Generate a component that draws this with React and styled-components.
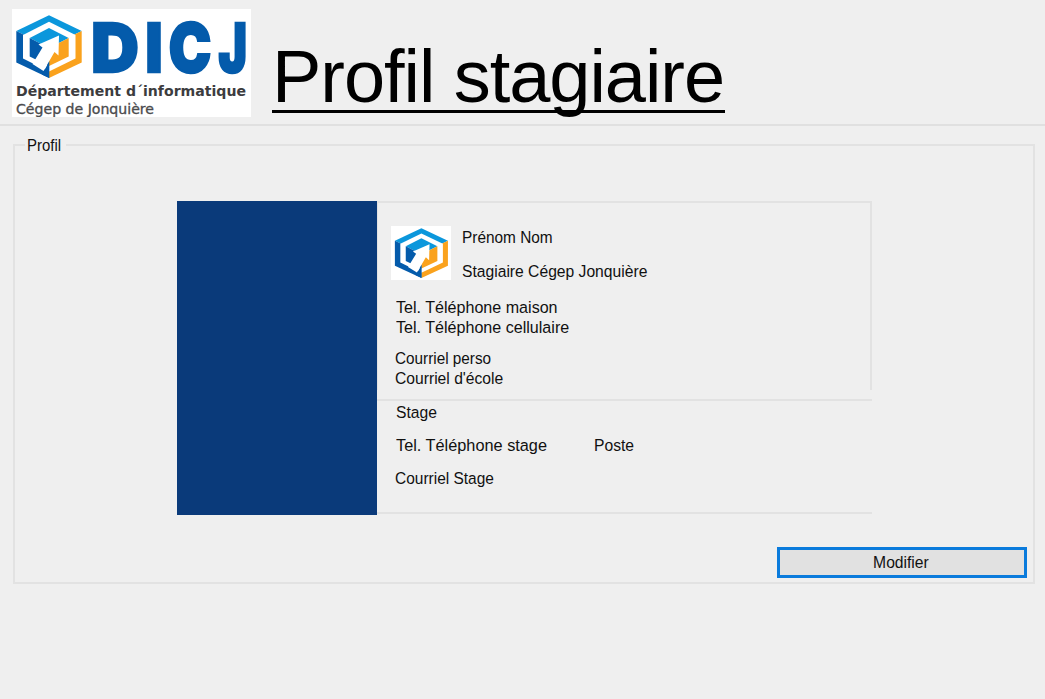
import React from "react";
import styled, { createGlobalStyle } from "styled-components";

const GlobalStyle = createGlobalStyle`
  * { box-sizing: border-box; }
  body {
    margin: 0;
    background: #efefef;
    color: #111;
    font-family: "Liberation Sans", Arial, sans-serif;
  }
`;

const Window = styled.main`
  width: 1045px;
  height: 699px;
  overflow: hidden;
  background: #efefef;
`;

const Header = styled.header`
  display: flex;
  align-items: flex-start;
  height: 126px;
  padding: 9px 0 0 12px;
  border-bottom: 2px solid #e0e0e0;
`;

const Logo = styled.svg`
  flex: none;
  display: block;
  width: 239px;
  height: 108px;
  background: #fff;
`;

const Title = styled.h1`
  margin: 27px 0 0 21px;
  height: 77px;
  width: 453px;
  border-bottom: 3px solid #000;
  color: #000;
  font-size: 74px;
  line-height: 82px;
  font-weight: 400;
  letter-spacing: -1.05px;
  white-space: nowrap;
`;

const GroupBox = styled.fieldset`
  margin: 9px 10px 0 13px;
  padding: 0 6px 0 162px;
  height: 449px;
  min-width: 0;
  border: 2px solid #e2e2e2;
`;

const Legend = styled.legend`
  margin-left: -152px;
  padding: 0 2px;
  height: 19px;
`;

const Text = styled.span`
  display: block;
  width: max-content;
  font-size: 17.4px;
  line-height: 20px;
  white-space: nowrap;
  transform: scaleX(${(p) => p.$scale || 0.9});
  transform-origin: ${(p) => p.$origin || "left"} center;
`;

const LegendBox = styled.div`
  width: 37px;
`;

const Card = styled.section`
  display: flex;
  margin-top: 47px;
  width: 695px;
  height: 314px;
`;

const Banner = styled.div`
  width: 200px;
  background: #0a3a7a;
`;

const Details = styled.div`
  flex: 1;
`;

const Person = styled.div`
  height: 189px;
  padding: 23px 0 0 13px;
  border: solid #e2e2e2;
  border-width: 2px 2px 0 1px;
`;

const Identity = styled.div`
  display: flex;
  gap: 11px;
  height: 71px;
`;

const Avatar = styled.svg`
  width: 60px;
  height: 54px;
  background: #fff;
`;

const Names = styled.div`
  display: grid;
  align-content: start;
  gap: 14px;
  padding-top: 1px;
`;

const Lines = styled.div`
  margin: 0 0 11px ${(p) => p.$indent}px;
  line-height: 20px;
`;

const Internship = styled.div`
  margin-top: 9px;
  height: 115px;
  padding: 1px 0 0 18px;
  border: solid #e2e2e2;
  border-width: 2px 0;
`;

const Row = styled.div`
  display: flex;
  height: 33px;
  padding-left: ${(p) => p.$indent || 0}px;
`;

const Cell = styled.div`
  width: 198px;
`;

const Actions = styled.div`
  display: flex;
  justify-content: flex-end;
  margin-top: 32px;
`;

const Button = styled.button`
  display: flex;
  align-items: center;
  justify-content: center;
  width: 250px;
  height: 31px;
  padding: 0 3px 2px 0;
  border: 3px solid #0a7bdc;
  background: #e1e1e1;
  color: #111;
  font-family: inherit;
`;

const Letter = styled.text`
  fill: #045bab;
  stroke: #045bab;
  stroke-width: 2.4px;
  font: 900 68px Inter, sans-serif;
`;

const LETTERS = [
  { char: "D", x: 79.3, width: 47.5 },
  { char: "I", x: 133.5, width: 17 },
  { char: "C", x: 156.8, width: 42.5 },
  { char: "J", x: 206.6, width: 28.5 },
];

function Cube() {
  return (
    <g>
      <path d="M37 6.3 69.7 22 37 38 4.3 22Z" fill="#0b97dc" />
      <path d="M4.3 22 37 38V69L4.3 53.5Z" fill="#045bab" />
      <path d="M69.7 22 37 38V69L69.7 53.5Z" fill="#faa21d" />
      <path d="M37 12.8 63.5 26V49.5L37 62.5 11 49.5V26Z" fill="#fff" />
      <path d="M37 19 56.7 29 37 39 17.7 29Z" fill="#0b97dc" />
      <path d="M17.7 29 37 39V57L17.7 47.5Z" fill="#045bab" />
      <path d="M56.7 29 37 39V57L56.7 47.5Z" fill="#faa21d" />
      <path d="M37.3 52V69L30 65.5Z" fill="#045bab" />
      <path d="M47 26.5 46.5 46.5 42.5 43 31.5 62 20.5 55 30.5 38.5 26.5 35.5Z" fill="#fff" />
    </g>
  );
}

function Label({ children, scale, origin }) {
  return <Text $scale={scale} $origin={origin}>{children}</Text>;
}

export default function App() {
  return (
    <Window>
      <GlobalStyle />
      <Header>
        <Logo viewBox="0 0 239 108">
          <Cube />
          {LETTERS.map(({ char, x, width }) => (
            <Letter key={char} x={x} y="63" textLength={width} lengthAdjust="spacingAndGlyphs">{char}</Letter>
          ))}
          <text x="4" y="87" fill="#3c3c3e" fontFamily="DejaVu Sans, sans-serif" fontWeight="700" fontSize="13.6" textLength="230" lengthAdjust="spacingAndGlyphs">Département d´informatique</text>
          <text x="4" y="104.5" fill="#4a4a4c" stroke="#4a4a4c" strokeWidth="0.3" fontFamily="DejaVu Sans, sans-serif" fontSize="13.4" textLength="138" lengthAdjust="spacingAndGlyphs">Cégep de Jonquière</text>
        </Logo>
        <Title>Profil stagiaire</Title>
      </Header>
      <GroupBox>
        <Legend><LegendBox><Label scale={0.86}>Profil</Label></LegendBox></Legend>
        <Card>
          <Banner />
          <Details>
            <Person>
              <Identity>
                <Avatar viewBox="-0.5 3.5 74 68" preserveAspectRatio="none"><Cube /></Avatar>
                <Names>
                  <Label scale={0.885}>Prénom Nom</Label>
                  <Label scale={0.9}>Stagiaire Cégep Jonquière</Label>
                </Names>
              </Identity>
              <Lines $indent={5}>
                <Label scale={0.925}>Tel. Téléphone maison</Label>
                <Label scale={0.925}>Tel. Téléphone cellulaire</Label>
              </Lines>
              <Lines $indent={4}>
                <Label scale={0.88}>Courriel perso</Label>
                <Label scale={0.9}>Courriel d'école</Label>
              </Lines>
            </Person>
            <Internship>
              <Row $indent={1}><Label scale={0.9}>Stage</Label></Row>
              <Row $indent={1}>
                <Cell><Label scale={0.937}>Tel. Téléphone stage</Label></Cell>
                <Label scale={0.9}>Poste</Label>
              </Row>
              <Row><Label scale={0.89}>Courriel Stage</Label></Row>
            </Internship>
          </Details>
        </Card>
        <Actions>
          <Button type="button"><Label scale={0.9} origin="center">Modifier</Label></Button>
        </Actions>
      </GroupBox>
    </Window>
  );
}
